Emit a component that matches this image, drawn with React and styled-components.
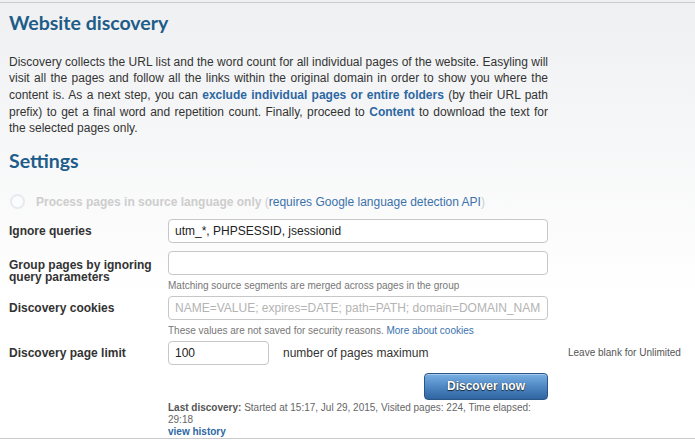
import React from "react";
import styled, { createGlobalStyle } from "styled-components";

const Global = createGlobalStyle`
  html, body { margin: 0; padding: 0; }
  body {
    background: #fff linear-gradient(#eff0f2 0, #ffffff 300px) no-repeat;
    font-family: "Liberation Sans", Arial, Helvetica, sans-serif;
    color: #333;
  }
`;

const Page = styled.div`
  margin-top: 2px;
  border-top: 1px solid #c9cacc;
  border-bottom: 1px solid #c9cacc;
  padding: 0 9px;
  width: 695px;
  box-sizing: border-box;
`;

const Heading = styled.h2`
  margin: ${(p) => p.$top}px 0 0;
  font-family: Lato, "Open Sans", sans-serif;
  font-weight: 700;
  font-size: 19.5px;
  line-height: 24px;
  color: #1e5c89;
`;

const Intro = styled.p`
  margin: 18.5px 0 0;
  width: 539px;
  font-size: 12px;
  line-height: 16.67px;
  text-align: justify;
  color: #333;
`;

const StrongLink = styled.a`
  color: #2c67a2;
  font-weight: 700;
  text-decoration: none;
`;

const RadioRow = styled.label`
  display: flex;
  align-items: center;
  margin-top: 21px;
  height: 16px;
  font-size: 12px;
  line-height: 16px;
`;

const RadioCircle = styled.span`
  box-sizing: border-box;
  width: 15px;
  height: 15px;
  margin: 0 11px 0 1px;
  border-radius: 50%;
  border: 2px solid #e6e9ed;
  background: #fbfcfd;
`;

const Disabled = styled.span`
  color: #cdcdcd;
  font-weight: ${(p) => (p.$bold ? 700 : 400)};
`;

const SoftLink = styled.a`
  color: #3b72ab;
  text-decoration: none;
`;

const Form = styled.div`
  margin-top: 9px;
`;

const Row = styled.div`
  display: grid;
  grid-template-columns: 159px 380px 1fr;
  align-items: start;
  margin-bottom: ${(p) => p.$after || 0}px;
`;

const Label = styled.div`
  font-size: 12px;
  font-weight: 700;
  color: #333;
  line-height: ${(p) => (p.$multi ? "12.5px" : "24px")};
  padding-top: ${(p) => (p.$multi ? 8 : 0)}px;
`;

const Field = styled.div`
  display: flex;
  flex-direction: column;
`;

const Input = styled.input`
  box-sizing: border-box;
  width: ${(p) => p.$width || "100%"};
  height: 24px;
  margin: 0;
  padding: 0 6px;
  border: 1px solid #c7c7c7;
  border-radius: 4px;
  background: #fff;
  font-family: "Liberation Sans", Arial, sans-serif;
  font-size: 12px;
  color: #222;
  outline: none;
  &::placeholder { color: #b3b3b3; }
`;

const Help = styled.div`
  margin: 5px 0 4px;
  font-size: 10px;
  line-height: 12px;
  color: #777;
`;

const HelpLink = styled.a`
  color: #3b72ab;
  text-decoration: none;
`;

const Inline = styled.div`
  display: flex;
  align-items: center;
  gap: 14px;
  font-size: 12px;
  color: #333;
`;

const Side = styled.div`
  padding-left: 20px;
  font-size: 10px;
  line-height: 24px;
  color: #555;
`;

const Actions = styled.div`
  grid-column: 2;
  display: flex;
  flex-direction: column;
  margin-top: 8px;
`;

const Button = styled.button`
  align-self: flex-end;
  box-sizing: border-box;
  width: 124px;
  height: 27px;
  margin: 0;
  border: 1px solid #2a5684;
  border-radius: 4px;
  background: linear-gradient(#79afe3 0%, #4f88c4 50%, #2f64a0 100%);
  box-shadow: inset 0 1px 0 rgba(255, 255, 255, 0.35);
  font-family: "Liberation Sans", Arial, sans-serif;
  font-size: 12px;
  font-weight: 700;
  color: #fff;
  text-shadow: 0 1px 1px rgba(0, 0, 0, 0.7), 0 0 1px rgba(0, 0, 0, 0.5);
  cursor: pointer;
`;

const Last = styled.div`
  margin-top: 2px;
  font-size: 10px;
  line-height: 12px;
  color: #666;
`;

const LastLabel = styled.span`
  font-weight: 700;
  color: #555;
`;

const HistoryLink = styled.a`
  display: block;
  font-weight: 700;
  color: #2c67a2;
  text-decoration: none;
`;

export default function App() {
  return (
    <>
      <Global />
      <Page>
        <Heading $top={8}>Website discovery</Heading>
        <Intro>
          Discovery collects the URL list and the word count for all individual pages of the
          website. Easyling will visit all the pages and follow all the links within the original
          domain in order to show you where the content is. As a next step, you can{" "}
          <StrongLink href="#">exclude individual pages or entire folders</StrongLink> (by their
          URL path prefix) to get a final word and repetition count. Finally, proceed to{" "}
          <StrongLink href="#">Content</StrongLink> to download the text for the selected pages
          only.
        </Intro>

        <Heading $top={12}>Settings</Heading>

        <RadioRow>
          <RadioCircle />
          <Disabled $bold>Process pages in source language only</Disabled>
          <Disabled>&nbsp;(</Disabled>
          <SoftLink href="#">requires Google language detection API</SoftLink>
          <Disabled>)</Disabled>
        </RadioRow>

        <Form>
          <Row $after={8}>
            <Label>Ignore queries</Label>
            <Field>
              <Input defaultValue="utm_*, PHPSESSID, jsessionid" />
            </Field>
          </Row>

          <Row>
            <Label $multi>
              Group pages by ignoring
              <br />
              query parameters
            </Label>
            <Field>
              <Input />
              <Help>Matching source segments are merged across pages in the group</Help>
            </Field>
          </Row>

          <Row>
            <Label>Discovery cookies</Label>
            <Field>
              <Input placeholder="NAME=VALUE; expires=DATE; path=PATH; domain=DOMAIN_NAME; secure" />
              <Help>
                These values are not saved for security reasons.{" "}
                <HelpLink href="#">More about cookies</HelpLink>
              </Help>
            </Field>
          </Row>

          <Row>
            <Label>Discovery page limit</Label>
            <Inline>
              <Input $width="101px" defaultValue="100" />
              <span>number of pages maximum</span>
            </Inline>
            <Side>Leave blank for Unlimited</Side>
            <Actions>
              <Button type="button">Discover now</Button>
              <Last>
                <LastLabel>Last discovery:</LastLabel> Started at 15:17, Jul 29, 2015, Visited
                pages: 224, Time elapsed: 29:18
                <HistoryLink href="#">view history</HistoryLink>
              </Last>
            </Actions>
          </Row>
        </Form>
      </Page>
    </>
  );
}
